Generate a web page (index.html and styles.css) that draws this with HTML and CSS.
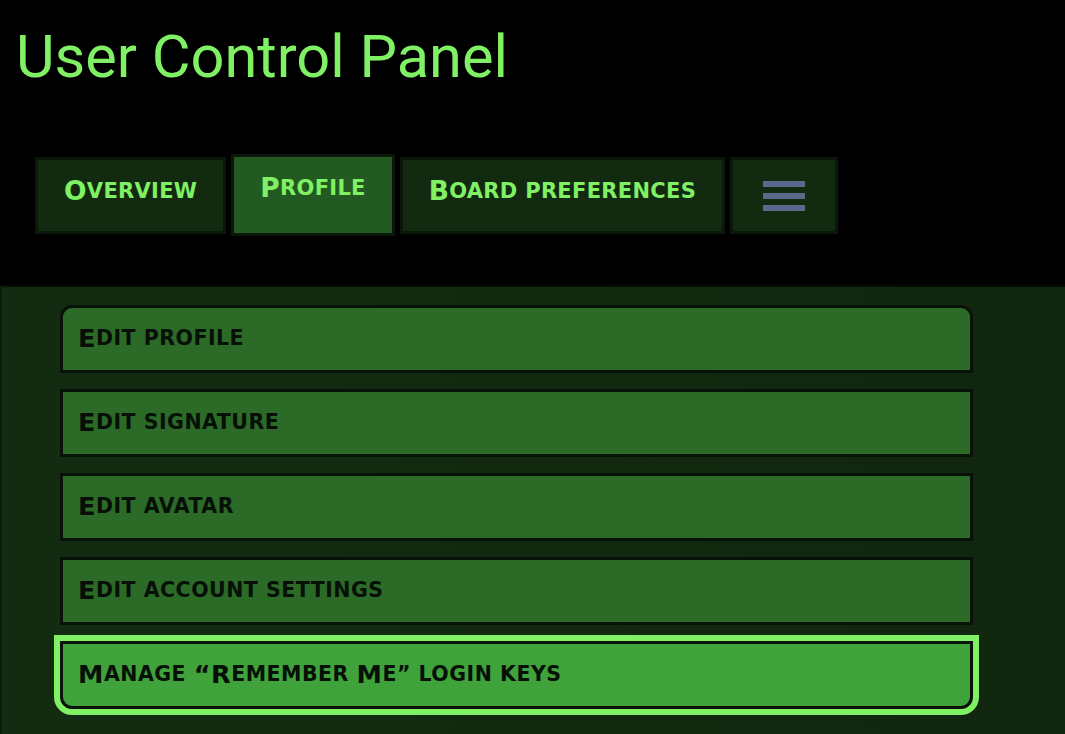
FILE: index.html
```html
<!DOCTYPE html>
<html lang="en">
<head>
    <meta charset="UTF-8">
    <meta name="viewport" content="width=device-width, initial-scale=1.0">
    <title>User Control Panel</title>
    <link rel="stylesheet" href="styles.css">
</head>
<body>
    <h1 class="pageTitle">User Control Panel</h1>

    <nav class="tabs">
        <a class="tab" href="#"><span class="cap">O</span>verview</a>
        <a class="tab active" href="#"><span class="cap">P</span>rofile</a>
        <a class="tab" href="#"><span class="cap">B</span>oard preferences</a>
        <a class="tab menuTab" href="#" aria-label="More">
            <span class="burger">
                <span></span>
                <span></span>
                <span></span>
            </span>
        </a>
    </nav>

    <div class="panel">
        <ul class="subMenu">
            <li class="item"><a href="#"><span class="cap">E</span>dit profile</a></li>
            <li class="item"><a href="#"><span class="cap">E</span>dit signature</a></li>
            <li class="item"><a href="#"><span class="cap">E</span>dit avatar</a></li>
            <li class="item"><a href="#"><span class="cap">E</span>dit account settings</a></li>
            <li class="item current"><a href="#"><span class="cap">M</span>anage <span class="cap">“R</span>emember <span class="cap">M</span>e” login keys</a></li>
        </ul>
    </div>
</body>
</html>
```

FILE: styles.css
```css
* {
    margin: 0;
    padding: 0;
    box-sizing: border-box;
}

body {
    font-family: Roboto, "Liberation Sans", sans-serif;
    background: #000;
    color: #80f064;
    min-height: 100vh;
    overflow: hidden;
}

a {
    color: inherit;
    text-decoration: none;
}

.pageTitle {
    font-size: 59.5px;
    font-weight: 400;
    line-height: 70px;
    padding: 22px 16px 0;
    color: #80f064;
}

.tabs {
    display: flex;
    align-items: flex-start;
    gap: 5px;
    margin-top: 62px;
    padding-left: 35px;
}

.tab {
    display: flex;
    align-items: flex-start;
    height: 77px;
    margin-top: 3px;
    padding: 19px 26px 0;
    background: #122a10;
    border: 3px solid #0a170a;
    font-family: "DejaVu Sans", sans-serif;
    font-size: 21px;
    font-weight: 700;
    line-height: 24px;
    letter-spacing: 0.3px;
    text-transform: uppercase;
    color: #80f064;
}

.tab .cap {
    font-size: 26.5px;
}

.tab.active {
    height: 82px;
    margin-top: 0;
    background: #235a21;
}

.menuTab {
    align-items: center;
    padding: 0 30px;
}

.burger {
    display: flex;
    flex-direction: column;
    gap: 6px;
}

.burger span {
    display: block;
    width: 42px;
    height: 6px;
    background: #58698a;
}

.panel {
    margin-top: 49px;
    min-height: 460px;
    background: linear-gradient(90deg, #132c11, #10260e);
    border-top: 2px solid #050d05;
    border-left: 2px solid #0b1a0a;
    padding: 18px 92px 40px 58px;
}

.subMenu {
    list-style: none;
    display: flex;
    flex-direction: column;
    gap: 16px;
}

.item a {
    display: flex;
    align-items: center;
    height: 68px;
    padding: 0 15px 2px;
    background: #2c6a28;
    border: 3px solid #081208;
    color: #061006;
    font-family: "DejaVu Sans", sans-serif;
    font-size: 20.5px;
    font-weight: 700;
    letter-spacing: 0.5px;
    text-transform: uppercase;
    white-space: pre;
}

.item .cap {
    font-size: 25.5px;
}

.item:first-child a {
    border-radius: 12px 12px 0 0;
}

.item.current a {
    background: #40a23a;
    border-radius: 0 0 12px 12px;
    box-shadow: 0 0 0 6px #80f064;
}
```
